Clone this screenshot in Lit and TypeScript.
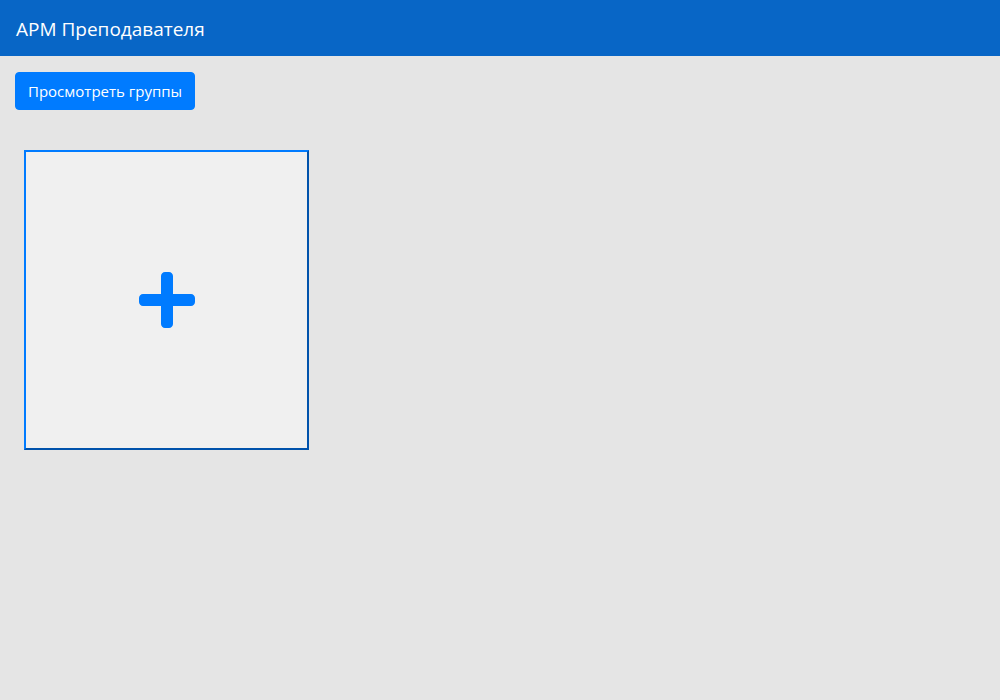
import { LitElement, html, css } from "lit";
import { customElement } from "lit/decorators.js";

@customElement("app-root")
export class AppRoot extends LitElement {
  static styles = css`
    :host {
      display: flex;
      flex-direction: column;
      min-height: 100vh;
      background: #e5e5e5;
      font-family: "Segoe UI", "Open Sans", "Noto Sans", sans-serif;
      font-size: 16px;
      line-height: 24px;
    }
    * {
      box-sizing: border-box;
    }
    .navbar {
      display: flex;
      align-items: center;
      padding: 8px 16px;
      background: #0866c6;
    }
    .brand {
      padding: 6px 0 4px;
      color: #fff;
      font-size: 19px;
      line-height: 30px;
      text-decoration: none;
      white-space: nowrap;
    }
    .content {
      padding: 16px 15px;
    }
    .btn {
      padding: 6px 12px;
      border: 1px solid #007bff;
      border-radius: 4px;
      background: #007bff;
      color: #fff;
      font: inherit;
      font-size: 15px;
      cursor: pointer;
    }
    .cards {
      display: grid;
      grid-template-columns: repeat(auto-fill, 285px);
      gap: 16px;
      padding: 40px 9px 0;
    }
    .add {
      display: flex;
      align-items: center;
      justify-content: center;
      height: 300px;
      padding: 0;
      border: 2px outset #007bff;
      background: #f0f0f0;
      color: #007bff;
      cursor: pointer;
    }
    .plus {
      width: 56px;
      height: 64px;
      fill: currentColor;
    }
  `;

  render() {
    return html`
      <nav class="navbar"><a class="brand" href="#">АРМ Преподавателя</a></nav>
      <main class="content">
        <button class="btn" type="button">Просмотреть группы</button>
        <div class="cards">
          <button class="add" type="button" aria-label="Добавить">
            <svg class="plus" viewBox="0 0 448 512" aria-hidden="true">
              <path d="M416 208H272V64c0-17.67-14.33-32-32-32h-32c-17.67 0-32 14.33-32 32v144H32c-17.67 0-32 14.33-32 32v32c0 17.67 14.33 32 32 32h144v144c0 17.67 14.33 32 32 32h32c17.67 0 32-14.33 32-32V304h144c17.67 0 32-14.33 32-32v-32c0-17.67-14.33-32-32-32z"></path>
            </svg>
          </button>
        </div>
      </main>
    `;
  }
}
